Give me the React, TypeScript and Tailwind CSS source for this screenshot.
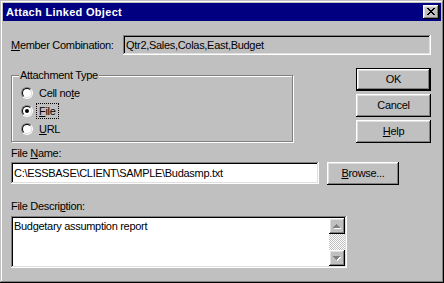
import React from 'react';

const raised =
  'shadow-[inset_-1px_-1px_0_#000,inset_1px_1px_0_#fff,inset_-2px_-2px_0_#808080,inset_2px_2px_0_#dfdfdf]';
const sunken =
  'shadow-[inset_-1px_-1px_0_#fff,inset_1px_1px_0_#808080,inset_-2px_-2px_0_#dfdfdf,inset_2px_2px_0_#000]';

function Key({ children }: { children: React.ReactNode }) {
  return <span className="underline underline-offset-[1px] decoration-1">{children}</span>;
}

function Radio({ checked }: { checked?: boolean }) {
  return (
    <span className="relative w-[12px] h-[12px] rounded-full border border-t-[#808080] border-l-[#808080] border-b-white border-r-white shrink-0">
      <span className="absolute inset-0 rounded-full border border-t-black border-l-black border-b-[#dfdfdf] border-r-[#dfdfdf] bg-white flex items-center justify-center">
        {checked && <span className="w-[4px] h-[4px] rounded-full bg-black" />}
      </span>
    </span>
  );
}

function Btn({ children, isDefault, className = '' }: { children: React.ReactNode; isDefault?: boolean; className?: string }) {
  return (
    <div className={`h-[23px] bg-[#c0c0c0] ${isDefault ? 'border border-black' : ''} ${className}`}>
      <div className={`w-full h-full flex items-center justify-center ${raised}`}>{children}</div>
    </div>
  );
}

function Arrow({ up }: { up?: boolean }) {
  return (
    <div className={`w-[16px] h-[16px] bg-[#c0c0c0] flex items-center justify-center ${raised}`}>
      <svg width="8" height="5" viewBox="0 0 8 5" shapeRendering="crispEdges">
        {up ? (
          <>
            <path d="M4 0h1v1h1v1h1v1h1v1h-7v-1h1v-1h1v-1h1z" fill="#fff" transform="translate(0 1)" />
            <path d="M3 0h1v1h1v1h1v1h1v1h-7v-1h1v-1h1z" fill="#808080" />
          </>
        ) : (
          <>
            <path d="M1 1h7v1h-1v1h-1v1h-1v1h-1v-1h-1v-1h-1v-1h-1z" fill="#fff" />
            <path d="M0 0h7v1h-1v1h-1v1h-1v1h-1v-1h-1v-1h-1v-1h-1z" fill="#808080" />
          </>
        )}
      </svg>
    </div>
  );
}

export default function App() {
  return (
    <div className="w-[444px] h-[283px] bg-[#c0c0c0] p-[3px] flex flex-col text-[11px] leading-[13px] tracking-[-0.3px] text-black font-['Liberation_Sans',Arial,sans-serif] shadow-[inset_-1px_-1px_0_#000,inset_1px_1px_0_#c0c0c0,inset_-2px_-2px_0_#808080,inset_2px_2px_0_#fff]">
      <div className="h-[18px] bg-[#000080] flex items-center justify-between pl-[3px] pr-[2px]">
        <span className="text-white font-bold tracking-[0.3px]">Attach Linked Object</span>
        <div className={`w-[16px] h-[14px] bg-[#c0c0c0] flex items-center justify-center ${raised}`}>
          <svg width="8" height="7" viewBox="0 0 8 7" shapeRendering="crispEdges" className="mb-[1px]">
            <path d="M0 0h2v1h1v1h2v-1h1v-1h2v1h-1v1h-1v1h-1v1h1v1h1v1h1v1h-2v-1h-1v-1h-2v1h-1v1h-2v-1h1v-1h1v-1h1v-1h-1v-1h-1v-1h-1z" fill="#000" />
          </svg>
        </div>
      </div>

      <div className="mt-[14px] h-[20px] flex items-center pl-[8px]">
        <span className="w-[112px]">
          <Key>M</Key>ember Combination:
        </span>
        <div className={`w-[308px] h-[20px] flex items-center pl-[3px] ${sunken}`}>Qtr2,Sales,Colas,East,Budget</div>
      </div>

      <div className="mt-[13px] flex pl-[8px] pr-[10px]">
        <div className="relative mt-[7px] w-[282px] h-[67px] border border-[#808080] shadow-[inset_1px_1px_0_#fff,1px_1px_0_#fff]">
          <span className="absolute left-[7px] top-[-7px] bg-[#c0c0c0] px-[1px]">Attachment Type</span>
          <div className="flex flex-col pt-[11px] pl-[9px] gap-[6px]">
            <div className="flex items-center h-[12px]">
              <Radio />
              <span className="ml-[6px]">
                Cell no<Key>t</Key>e
              </span>
            </div>
            <div className="flex items-center h-[12px]">
              <Radio checked />
              <span className="ml-[3px] px-[2px] border border-dotted border-black leading-[14px]">
                <Key>F</Key>ile
              </span>
            </div>
            <div className="flex items-center h-[12px]">
              <Radio />
              <span className="ml-[6px]">
                <Key>U</Key>RL
              </span>
            </div>
          </div>
        </div>
        <div className="ml-auto w-[75px] flex flex-col gap-[3px]">
          <Btn isDefault>OK</Btn>
          <Btn>Cancel</Btn>
          <Btn>
            <span>
              <Key>H</Key>elp
            </span>
          </Btn>
        </div>
      </div>

      <div className="mt-[4px] pl-[8px]">
        File <Key>N</Key>ame:
      </div>
      <div className="mt-[2px] flex pl-[8px]">
        <div className={`w-[308px] h-[22px] bg-white flex items-center pl-[3px] ${sunken}`}>
          C:\ESSBASE\CLIENT\SAMPLE\Budasmp.txt
        </div>
        <Btn className="ml-[8px] w-[72px]">
          <span>
            <Key>B</Key>rowse...
          </span>
        </Btn>
      </div>

      <div className="mt-[15px] pl-[8px]">
        File Descri<Key>p</Key>tion:
      </div>
      <div className="mt-[3px] pl-[8px]">
        <div className={`w-[336px] h-[52px] bg-white p-[2px] flex ${sunken}`}>
          <div className="flex-1 pl-[1px] pt-[2px]">Budgetary assumption report</div>
          <div className="w-[16px] flex flex-col">
            <Arrow up />
            <div className="flex-1 bg-[repeating-conic-gradient(#c0c0c0_0_25%,#fff_0_50%)] bg-[length:2px_2px]" />
            <Arrow />
          </div>
        </div>
      </div>
    </div>
  );
}
